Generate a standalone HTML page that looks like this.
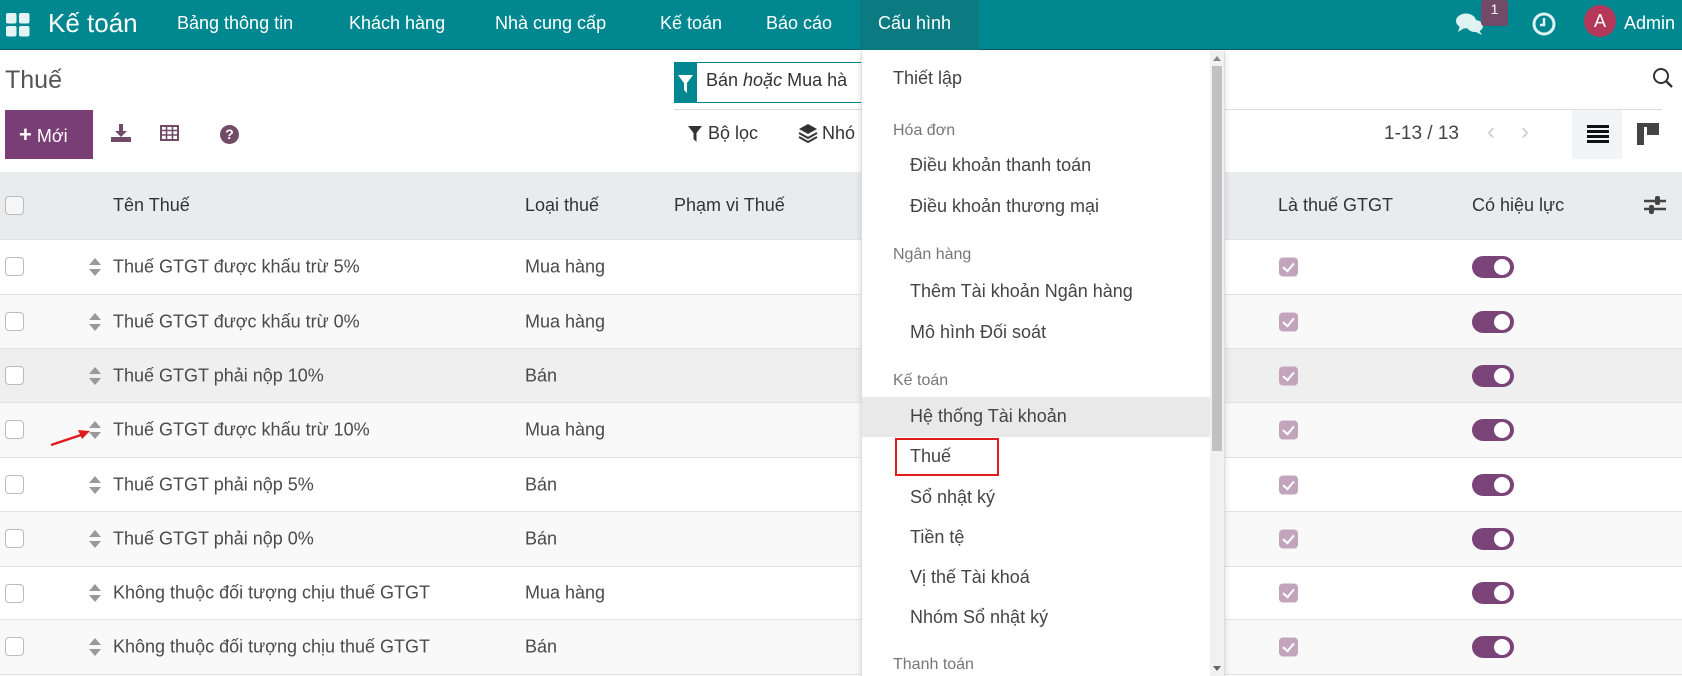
<!DOCTYPE html>
<html><head><meta charset="utf-8"><style>
*{box-sizing:border-box;margin:0;padding:0}
body{width:1682px;height:676px;overflow:hidden;background:#fff;font-family:"Liberation Sans",sans-serif;color:#444;position:relative}
.a{position:absolute;white-space:nowrap}
.nav{position:absolute;left:0;top:0;width:1682px;height:50px;background:#01878f;border-bottom:1px solid #0b5e63}
.nav .a{color:#fff;font-size:18px;top:13px}
.hdr{position:absolute;left:0;top:172px;width:1682px;height:68px;background:#e9ecef;border-bottom:1px solid #dee2e6}
.row{position:absolute;left:0;width:1682px;border-bottom:1px solid #e3e3e3}
.cb{position:absolute;width:19px;height:19px;border:1px solid #bbb;border-radius:4px;background:#fff}
.row .t{position:absolute;font-size:18px;color:#4a4a4a;top:50%;transform:translateY(-50%);white-space:nowrap}
.chk{position:absolute;left:1279px;width:19px;height:19px;border-radius:4px;background:#c2a5bd;top:50%;transform:translateY(-50%)}
.chk:after{content:"";position:absolute;left:6px;top:3px;width:5px;height:9px;border:solid #fff;border-width:0 2px 2px 0;transform:rotate(40deg)}
.tg{position:absolute;left:1472px;width:42px;height:22px;border-radius:11px;background:#7a4478;top:50%;transform:translateY(-50%)}
.tg:after{content:"";position:absolute;right:4px;top:3px;width:16px;height:16px;border-radius:50%;background:#fff}
.sort{position:absolute;left:89px;top:50%;transform:translateY(-50%);width:12px;height:18px}
.sort:before{content:"";position:absolute;left:0;top:0;border:6px solid transparent;border-bottom:7px solid #999;border-top:0}
.sort:after{content:"";position:absolute;left:0;bottom:0;border:6px solid transparent;border-top:7px solid #999;border-bottom:0}
.dd{position:absolute;left:861px;top:51px;width:364px;height:625px;background:#fff;border-left:1px solid #ddd;border-right:1px solid #ddd;box-shadow:0 2px 6px rgba(0,0,0,.15)}
.dd .i{position:absolute;left:48px;font-size:18px;color:#444;white-space:nowrap}
.dd .h{position:absolute;left:31px;font-size:16px;color:#777;white-space:nowrap}
</style></head><body>
<div class="nav">
 <svg class="a" style="left:6px;top:13px" width="24" height="24" viewBox="0 0 24 24" fill="#e4f4f4"><rect x="0" y="0" width="10.5" height="10.5" rx="2"/><rect x="13" y="0" width="10.5" height="10.5" rx="2"/><rect x="0" y="13" width="10.5" height="10.5" rx="2"/><rect x="13" y="13" width="10.5" height="10.5" rx="2"/></svg>
 <div class="a" style="left:48px;top:8px;font-size:26px">Kế toán</div>
 <div class="a" style="left:177px">Bảng thông tin</div>
 <div class="a" style="left:349px">Khách hàng</div>
 <div class="a" style="left:495px">Nhà cung cấp</div>
 <div class="a" style="left:660px">Kế toán</div>
 <div class="a" style="left:766px">Báo cáo</div>
 <div style="position:absolute;left:860px;top:0;width:119px;height:50px;background:#0b7a81"></div>
 <div class="a" style="left:878px">Cấu hình</div>
 <svg class="a" style="left:1455px;top:12px" width="30" height="24" viewBox="0 0 30 24" fill="#dff3f3"><ellipse cx="11" cy="9" rx="10" ry="7.5"/><path d="M5 14 L3 20 L11 15Z"/><ellipse cx="20" cy="14" rx="8" ry="6"/><path d="M24 18 L27 23 L19 19Z"/></svg>
 <div style="position:absolute;left:1481px;top:0;width:27px;height:26px;background:#714b67;border-radius:3px;color:#fff;font-size:14px;text-align:center;line-height:18px">1</div>
 <svg class="a" style="left:1531px;top:11px" width="26" height="26" viewBox="0 0 26 26"><circle cx="13" cy="13" r="10" fill="none" stroke="#dff3f3" stroke-width="3"/><path d="M13 7 V14 H9" fill="none" stroke="#dff3f3" stroke-width="2.5"/></svg>
 <div style="position:absolute;left:1584px;top:5px;width:32px;height:32px;border-radius:50%;background:#b5385a;color:#fff;font-size:18px;text-align:center;line-height:32px">A</div>
 <div class="a" style="left:1624px">Admin</div>
</div>

<div class="a" style="left:5px;top:66px;font-size:25px;color:#555">Thuế</div>
<div style="position:absolute;left:674px;top:62px;width:23px;height:41px;background:#01878f"></div>
<svg class="a" style="left:678px;top:75px" width="15" height="18" viewBox="0 0 15 18"><path d="M0 0 H15 L9 8 V18 L6 15 V8Z" fill="#fff"/></svg>
<div style="position:absolute;left:674px;top:62px;width:200px;height:41px;border-top:1px solid #01878f;border-bottom:1px solid #01878f"></div>
<div class="a" style="left:706px;top:70px;font-size:18px;color:#333">Bán <i>hoặc</i> Mua hà</div>
<svg class="a" style="left:1652px;top:67px" width="22" height="22" viewBox="0 0 22 22"><circle cx="9" cy="9" r="7" fill="none" stroke="#333" stroke-width="2"/><path d="M14 14 L20 20" stroke="#333" stroke-width="2.4"/></svg>
<div style="position:absolute;left:674px;top:109px;width:988px;height:1px;background:#ddd"></div>

<div style="position:absolute;left:5px;top:110px;width:88px;height:49px;background:#7a3e76;color:#fff;font-size:18px;line-height:49px;padding-left:14px"><b style="font-size:22px">+</b> Mới</div>
<svg class="a" style="left:111px;top:124px" width="20" height="18" viewBox="0 0 20 18" fill="#714b67"><rect x="8" y="0" width="4" height="8"/><path d="M4 7 H16 L10 13Z"/><rect x="0" y="13" width="20" height="5"/></svg>
<svg class="a" style="left:160px;top:125px" width="19" height="16" viewBox="0 0 19 16"><rect x="1" y="1" width="17" height="14" fill="none" stroke="#714b67" stroke-width="2"/><path d="M1 5.5H18M1 10H18M6.5 1V15M12.5 1V15" stroke="#714b67" stroke-width="1.6"/></svg>
<div style="position:absolute;left:220px;top:125px;width:19px;height:19px;border-radius:50%;background:#714b67;color:#fff;font-size:14px;font-weight:bold;text-align:center;line-height:19px">?</div>

<svg class="a" style="left:688px;top:126px" width="14" height="16" viewBox="0 0 14 16"><path d="M0 0H14L8.5 7V16L5.5 13V7Z" fill="#333"/></svg>
<div class="a" style="left:708px;top:123px;font-size:18px;color:#333">Bộ lọc</div>
<svg class="a" style="left:798px;top:123px" width="20" height="20" viewBox="0 0 20 20"><path d="M10 1 L19 6 L10 11 L1 6Z" fill="#333"/><path d="M1 10 L10 15 L19 10 M1 14 L10 19 L19 14" fill="none" stroke="#333" stroke-width="2"/></svg>
<div class="a" style="left:822px;top:123px;font-size:18px;color:#333">Nhó</div>
<div class="a" style="left:1384px;top:123px;font-size:19px;color:#444">1-13 / 13</div>
<div class="a" style="left:1487px;top:118px;font-size:24px;color:#ccc">‹</div>
<div class="a" style="left:1521px;top:118px;font-size:24px;color:#ccc">›</div>
<div style="position:absolute;left:1572px;top:110px;width:50px;height:49px;background:#f3f4f6"></div>
<svg class="a" style="left:1587px;top:125px" width="22" height="19" viewBox="0 0 22 19" fill="#111"><rect y="0" width="22" height="3"/><rect y="5" width="22" height="3"/><rect y="10" width="22" height="3"/><rect y="15" width="22" height="3"/></svg>
<svg class="a" style="left:1637px;top:123px" width="22" height="22" viewBox="0 0 22 22" fill="#444"><rect x="0" y="0" width="22" height="4"/><rect x="0" y="0" width="7" height="22"/><rect x="10" y="4" width="12" height="8"/></svg>

<div class="hdr">
 <div class="cb" style="left:5px;top:24px;background:#f6f6f6"></div>
 <div class="a" style="left:113px;top:23px;font-size:18px;color:#333">Tên Thuế</div>
 <div class="a" style="left:525px;top:23px;font-size:18px;color:#333">Loại thuế</div>
 <div class="a" style="left:674px;top:23px;font-size:18px;color:#333">Phạm vi Thuế</div>
 <div class="a" style="left:1278px;top:23px;font-size:18px;color:#333">Là thuế GTGT</div>
 <div class="a" style="left:1472px;top:23px;font-size:18px;color:#333">Có hiệu lực</div>
 <svg class="a" style="left:1644px;top:23px" width="22" height="20" viewBox="0 0 22 20"><path d="M0 6H22M0 14H22" stroke="#444" stroke-width="2.5"/><rect x="11" y="1" width="5" height="9" rx="2" fill="#444"/><rect x="5" y="10" width="5" height="9" rx="2" fill="#444"/></svg>
</div>

<div class="row" style="top:240px;height:55px;background:#fff"><div class="cb" style="left:5px;top:17px"></div><div class="sort"></div><div class="t" style="left:113px">Thuế GTGT được khấu trừ 5%</div><div class="t" style="left:525px">Mua hàng</div><div class="chk"></div><div class="tg"></div></div>
<div class="row" style="top:295px;height:54px;background:#f9f9f9"><div class="cb" style="left:5px;top:17px"></div><div class="sort"></div><div class="t" style="left:113px">Thuế GTGT được khấu trừ 0%</div><div class="t" style="left:525px">Mua hàng</div><div class="chk"></div><div class="tg"></div></div>
<div class="row" style="top:349px;height:54px;background:#efefef"><div class="cb" style="left:5px;top:17px"></div><div class="sort"></div><div class="t" style="left:113px">Thuế GTGT phải nộp 10%</div><div class="t" style="left:525px">Bán</div><div class="chk"></div><div class="tg"></div></div>
<div class="row" style="top:403px;height:55px;background:#f9f9f9"><div class="cb" style="left:5px;top:17px"></div><div class="sort"></div><div class="t" style="left:113px">Thuế GTGT được khấu trừ 10%</div><div class="t" style="left:525px">Mua hàng</div><div class="chk"></div><div class="tg"></div></div>
<div class="row" style="top:458px;height:54px;background:#fff"><div class="cb" style="left:5px;top:17px"></div><div class="sort"></div><div class="t" style="left:113px">Thuế GTGT phải nộp 5%</div><div class="t" style="left:525px">Bán</div><div class="chk"></div><div class="tg"></div></div>
<div class="row" style="top:512px;height:55px;background:#f9f9f9"><div class="cb" style="left:5px;top:17px"></div><div class="sort"></div><div class="t" style="left:113px">Thuế GTGT phải nộp 0%</div><div class="t" style="left:525px">Bán</div><div class="chk"></div><div class="tg"></div></div>
<div class="row" style="top:567px;height:53px;background:#fff"><div class="cb" style="left:5px;top:17px"></div><div class="sort"></div><div class="t" style="left:113px">Không thuộc đối tượng chịu thuế GTGT</div><div class="t" style="left:525px">Mua hàng</div><div class="chk"></div><div class="tg"></div></div>
<div class="row" style="top:620px;height:55px;background:#f9f9f9"><div class="cb" style="left:5px;top:17px"></div><div class="sort"></div><div class="t" style="left:113px">Không thuộc đối tượng chịu thuế GTGT</div><div class="t" style="left:525px">Bán</div><div class="chk"></div><div class="tg"></div></div>

<svg class="a" style="left:48px;top:426px" width="46" height="22" viewBox="0 0 46 22"><path d="M3 19 L36 8" stroke="#e01b1b" stroke-width="2.5"/><path d="M42 5 L30 4 L34 13Z" fill="#e01b1b"/></svg>

<div class="dd">
 <div class="i" style="left:31px;top:17px">Thiết lập</div>
 <div class="h" style="top:71px">Hóa đơn</div>
 <div class="i" style="top:104px">Điều khoản thanh toán</div>
 <div class="i" style="top:145px">Điều khoản thương mại</div>
 <div class="h" style="top:195px">Ngân hàng</div>
 <div class="i" style="top:230px">Thêm Tài khoản Ngân hàng</div>
 <div class="i" style="top:271px">Mô hình Đối soát</div>
 <div class="h" style="top:321px">Kế toán</div>
 <div style="position:absolute;left:0;top:346px;width:348px;height:40px;background:#e9e9e9"></div>
 <div class="i" style="top:355px">Hệ thống Tài khoản</div>
 <div style="position:absolute;left:33px;top:387px;width:104px;height:38px;border:2px solid #e01b1b"></div>
 <div class="i" style="top:395px">Thuế</div>
 <div class="i" style="top:436px">Sổ nhật ký</div>
 <div class="i" style="top:476px">Tiền tệ</div>
 <div class="i" style="top:516px">Vị thế Tài khoá</div>
 <div class="i" style="top:556px">Nhóm Sổ nhật ký</div>
 <div class="h" style="top:605px">Thanh toán</div>
 <div style="position:absolute;left:348px;top:0;width:14px;height:625px;background:#f1f1f1"></div>
 <div style="position:absolute;left:350px;top:15px;width:10px;height:385px;background:#c1c1c1"></div>
 <div style="position:absolute;left:351px;top:5px;border:4px solid transparent;border-bottom:5px solid #888;border-top:0"></div>
 <div style="position:absolute;left:351px;top:615px;border:4px solid transparent;border-top:5px solid #666;border-bottom:0"></div>
</div>
</body></html>
